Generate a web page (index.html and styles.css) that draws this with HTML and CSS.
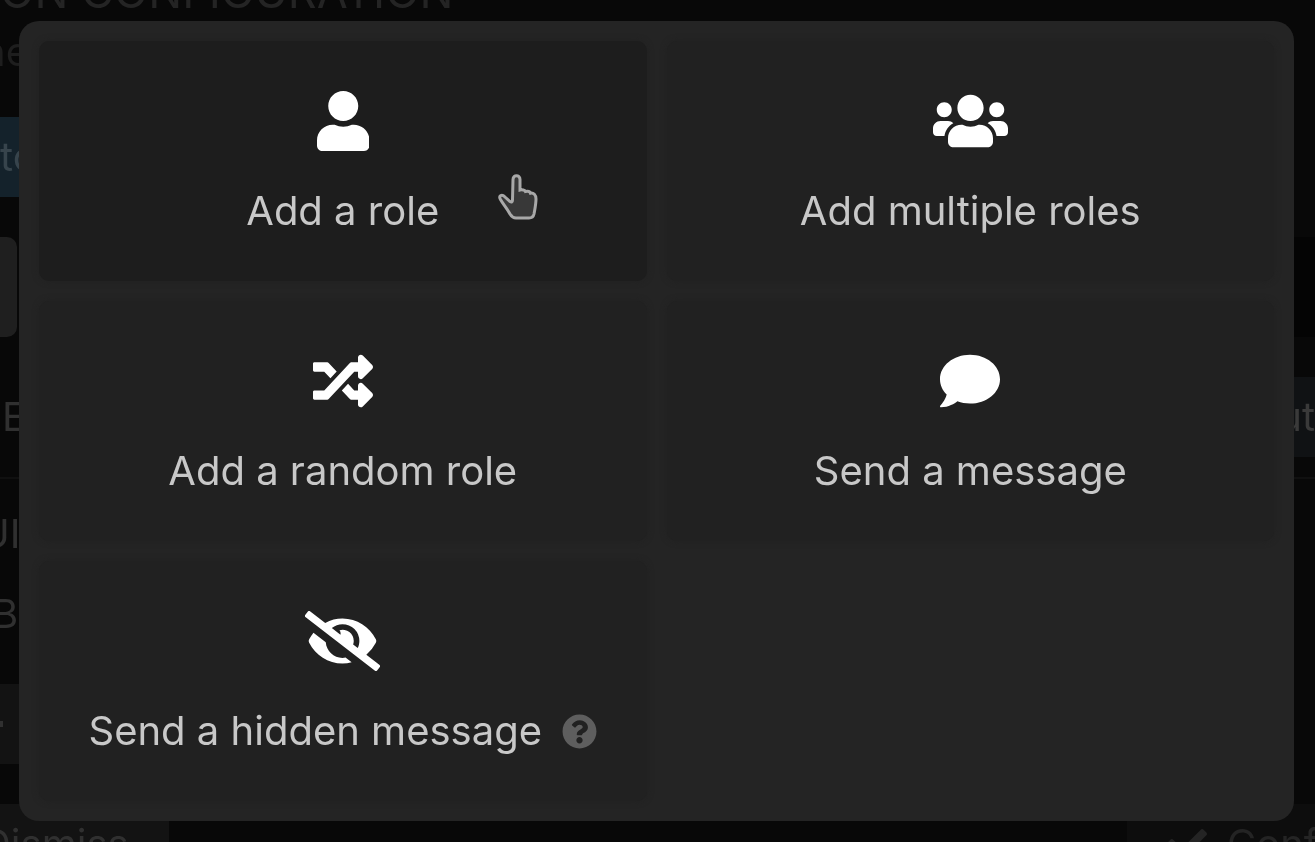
FILE: index.html
```html
<!DOCTYPE html>
<html lang="en">
  <head>
    <title>Add an action</title>
    <meta charset="UTF-8" />
    <link rel="stylesheet" href="styles.css">
  </head>
  <body>
    <div class="page">
      <h2 class="page-title">ON CONFIGURATION</h2>
      <div class="page-hint">ne</div>
      <div class="notice">to</div>
      <div class="preview">
        <div class="preview-tab"></div>
      </div>
      <div class="row row-split">
        <span>E</span>
        <button class="side-button">ut</button>
      </div>
      <div class="row row-upper"><span class="cut-more">U</span>I</div>
      <div class="row row-label"><span class="cut">B</span></div>
      <div class="field"><span class="field-mark"></span></div>
      <div class="footer">
        <button class="footer-button dismiss"><span>Dismiss</span></button>
        <button class="footer-button confirm">
          <svg class="check" viewBox="0 0 512 512" aria-hidden="true"><path d="M173.9 439.4l-166.4-166.4c-10-10-10-26.200 0-36.200l36.200-36.200c10-10 26.200-10 36.200 0L192 312.700 432.100 72.600c10-10 26.200-10 36.200 0l36.200 36.200c10 10 10 26.200 0 36.200l-294.400 294.400c-10 10-26.200 10-36.200 0z"/></svg>
          <span>Confirm</span>
        </button>
      </div>
    </div>

    <div class="backdrop">
      <div class="modal" role="dialog" aria-modal="true" aria-label="Add an action">
        <button class="card active">
          <svg class="icon" viewBox="0 0 448 512" aria-hidden="true"><path d="M224 256c70.7 0 128-57.3 128-128S294.7 0 224 0 96 57.3 96 128s57.3 128 128 128zm89.6 32h-16.7c-22.2 10.2-46.9 16-72.9 16s-50.6-5.8-72.900-16h-16.700C60.200 288 0 348.200 0 422.400V464c0 26.500 21.500 48 48 48h352c26.500 0 48-21.500 48-48v-41.600c0-74.200-60.200-134.400-134.400-134.400z"/></svg>
          <span class="label">Add a role</span>
          <svg class="pointer" viewBox="0 0 42 48" aria-hidden="true"><path d="M16 6.500c0-5 7-5 7 0v10.500c2-.5 5 0 5.500 1.500 2.500-.6 4.500.2 5 1.700 3-.5 5.500 1.500 5.500 5.800 0 5-1 9.500-2 15-.6 2.700-2 4-5 4H19c-3 0-4.500-1.500-6-4-3-5.500-7-10-9.500-14.500C1 22.500 5 21 8 24l5 4.500c1.500 1 2.500.5 2.500-1.500z"/></svg>
        </button>
        <button class="card">
          <svg class="icon" viewBox="0 0 640 512" aria-hidden="true"><path d="M96 224c35.300 0 64-28.700 64-64s-28.700-64-64-64-64 28.700-64 64 28.700 64 64 64zm448 0c35.300 0 64-28.700 64-64s-28.700-64-64-64-64 28.700-64 64 28.700 64 64 64zm32 32h-64c-17.600 0-33.500 7.100-45.100 18.600 40.300 22.100 68.900 62 75.100 109.400h66c17.700 0 32-14.300 32-32v-32c0-35.300-28.700-64-64-64zm-256 0c61.900 0 112-50.100 112-112S381.900 32 320 32 208 82.100 208 144s50.100 112 112 112zm76.800 32h-8.300c-20.800 10-43.900 16-68.500 16s-47.600-6-68.500-16h-8.300C179.600 288 128 339.600 128 403.200V432c0 26.500 21.500 48 48 48h288c26.500 0 48-21.500 48-48v-28.800c0-63.600-51.600-115.200-115.200-115.200zm-223.700-13.400C161.500 263.100 145.600 256 128 256H64c-35.300 0-64 28.700-64 64v32c0 17.700 14.300 32 32 32h65.900c6.300-47.400 34.900-87.300 75.200-109.400z"/></svg>
          <span class="label">Add multiple roles</span>
        </button>
        <button class="card">
          <svg class="icon" viewBox="0 0 512 512" aria-hidden="true"><path d="M504.971 359.029c9.373 9.373 9.373 24.569 0 33.941l-80 79.984c-15.010 15.010-40.971 4.490-40.971-16.971V416h-58.785a12.004 12.004 0 0 1-8.773-3.812l-70.556-75.596 53.333-57.143L352 336h32v-39.981c0-21.438 25.943-31.998 40.971-16.971l80 79.981zM12 176h84l52.781 56.551 53.333-57.143-70.556-75.596A11.999 11.999 0 0 0 122.785 96H12c-6.627 0-12 5.373-12 12v56c0 6.627 5.373 12 12 12zm372 0v39.984c0 21.460 25.961 31.980 40.971 16.971l80-79.984c9.373-9.373 9.373-24.569 0-33.941l-80-79.981C409.943 24.021 384 34.582 384 56.019V96h-58.785a12.004 12.004 0 0 0-8.773 3.812L96 336H12c-6.627 0-12 5.373-12 12v56c0 6.627 5.373 12 12 12h110.785c3.326 0 6.503-1.381 8.773-3.812L352 176h32z"/></svg>
          <span class="label">Add a random role</span>
        </button>
        <button class="card">
          <svg class="icon" viewBox="0 0 512 512" aria-hidden="true"><path d="M256 32C114.600 32 0 125.100 0 240c0 49.600 21.400 95 57 130.700C44.500 421.100 2.700 466 2.200 466.500c-2.200 2.300-2.800 5.700-1.500 8.700S4.800 480 8 480c66.300 0 116-31.800 140.600-51.400 32.700 12.300 69 19.400 107.400 19.400 141.400 0 256-93.100 256-208S397.400 32 256 32z"/></svg>
          <span class="label">Send a message</span>
        </button>
        <button class="card">
          <svg class="icon" viewBox="0 0 640 512" aria-hidden="true"><path d="M320 400c-75.850 0-137.250-58.710-142.900-133.110L72.200 185.820c-13.790 17.300-26.480 35.590-36.720 55.590a32.350 32.350 0 0 0 0 29.190C89.710 376.410 197.070 448 320 448c26.910 0 52.870-4 77.890-10.460L346 397.390a144.130 144.130 0 0 1-26 2.610zm313.820 58.100l-110.550-85.440a331.250 331.250 0 0 0 81.250-102.070 32.350 32.350 0 0 0 0-29.190C550.290 135.590 442.930 64 320 64a308.150 308.150 0 0 0-147.320 37.700L45.460 3.370A16 16 0 0 0 23 6.180L3.370 31.450A16 16 0 0 0 6.180 53.900l588.360 454.730a16 16 0 0 0 22.460-2.810l19.640-25.270a16 16 0 0 0-2.820-22.450zm-183.720-142l-39.300-30.380A94.750 94.750 0 0 0 416 256a94.760 94.760 0 0 0-121.310-92.210A47.650 47.650 0 0 1 304 192a46.640 46.640 0 0 1-1.540 10l-73.610-56.890A142.310 142.310 0 0 1 320 112a143.920 143.920 0 0 1 144 144c0 21.630-5.290 41.790-13.900 60.110z"/></svg>
          <span class="label">
            Send a hidden message
            <svg class="help" viewBox="0 0 512 512" aria-hidden="true"><path d="M504 256c0 136.997-111.043 248-248 248S8 392.997 8 256C8 119.083 119.043 8 256 8s248 111.083 248 248zM262.655 90c-54.497 0-89.255 22.957-116.549 63.758-3.536 5.286-2.353 12.415 2.715 16.258l34.699 26.310c5.205 3.947 12.621 3.008 16.665-2.122 17.864-22.658 30.113-35.797 57.303-35.797 20.429 0 45.698 13.148 45.698 32.958 0 14.976-12.363 22.667-32.534 33.976C247.128 238.528 216 254.941 216 296v4c0 6.627 5.373 12 12 12h56c6.627 0 12-5.373 12-12v-1.333c0-28.462 83.186-29.647 83.186-106.667 0-58.002-60.165-102-116.531-102zM256 338c-25.365 0-46 20.635-46 46 0 25.364 20.635 46 46 46s46-20.636 46-46c0-25.364-20.635-46-46-46z"/></svg>
          </span>
        </button>
      </div>
    </div>
  </body>
</html>
```
FILE: styles.css
```css
* {
  box-sizing: border-box;
}

body {
  margin: 0;
  background-color: #080808;
  font-family: Inter, "Liberation Sans", sans-serif;
  font-size: 40px;
  line-height: 60px;
}

button {
  border: none;
  font: inherit;
  cursor: pointer;
}

/* dimmed page under the dialog */
.page {
  position: fixed;
  inset: 0;
  display: flex;
  flex-direction: column;
  overflow: hidden;
  color: #303030;
}

.page > * {
  flex-shrink: 0;
}

.page-title {
  margin: -38px 0 0;
  font-size: 45px;
  font-weight: 400;
  color: #242424;
}

.page-hint {
  margin-left: -18px;
  color: #1e1e1e;
}

.notice {
  width: 50%;
  height: 80px;
  margin-top: 35px;
  padding: 10px 0;
  background-color: #14222b;
  color: #37444c;
}

.preview {
  height: 100px;
  margin-top: 40px;
  background: linear-gradient(to right, #080808 50%, #040404 50%);
}

.preview-tab {
  width: 17px;
  height: 100px;
  border-radius: 0 10px 10px 0;
  background-color: #1f1f1f;
}

.row-split {
  display: flex;
  justify-content: space-between;
  align-items: center;
  margin-top: 40px;
  padding: 0 0 20px 2px;
  border-bottom: 2px solid #101010;
}

.side-button {
  height: 80px;
  padding: 0 0 0 20px;
  background-color: #101214;
  color: #3a3a3a;
}

.row-upper {
  margin-top: 25px;
}

.row-label {
  margin-top: 20px;
}

.cut {
  margin-left: -8px;
}

.cut-more {
  margin-left: -20px;
}

.field {
  display: flex;
  align-items: center;
  width: 50%;
  height: 80px;
  margin-top: 40px;
  background-color: #131313;
}

.field-mark {
  width: 3px;
  height: 6px;
  background-color: #303030;
}

.footer {
  display: flex;
  justify-content: space-between;
  margin-top: 40px;
}

.footer-button {
  display: flex;
  align-items: center;
  gap: 20px;
  height: 80px;
  background-color: #131313;
  color: #303030;
}

.dismiss {
  margin-left: -58px;
  padding: 0 40px;
}

.confirm {
  margin-right: -104px;
  padding: 0 40px;
  background-color: #0d0d0d;
  color: #242424;
}

.check {
  width: 40px;
  height: 40px;
  fill: #242424;
}

/* dialog */
.backdrop {
  position: fixed;
  inset: 0;
  display: flex;
  align-items: center;
  padding: 20px 21px 20px 19px;
}

.modal {
  flex: 1;
  display: grid;
  grid-template-columns: 1fr 1fr;
  gap: 20px;
  padding: 20px;
  border-radius: 20px;
  background-color: #242424;
}

.card {
  position: relative;
  display: flex;
  flex-direction: column;
  align-items: center;
  gap: 30px;
  padding: 50px 20px 40px;
  border-radius: 10px;
  background-color: #212121;
  color: #c8c8c8;
  box-shadow: 0 0 6px #212121;
}

.card.active,
.card:hover {
  background-color: #1d1d1d;
}

.icon {
  height: 60px;
  fill: #fff;
}

.label {
  display: flex;
  align-items: center;
  gap: 20px;
}

.help {
  width: 35px;
  height: 35px;
  fill: #5e5e5e;
}

.pointer {
  position: absolute;
  top: 132px;
  left: 458px;
  width: 42px;
  height: 48px;
  fill: #383838;
  stroke: #a8a8a8;
  stroke-width: 3;
}
```
